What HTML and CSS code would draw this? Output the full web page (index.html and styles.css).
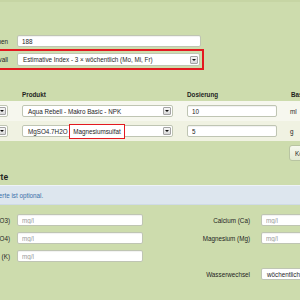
FILE: index.html
```html
<!DOCTYPE html>
<html lang="de">
<head>
    <meta charset="UTF-8">
    <meta name="viewport" content="width=device-width, initial-scale=1.0">
    <title>Düngeplan</title>
    <link rel="stylesheet" href="styles.css">
</head>
<body>

    <div class="page">
        <div class="form-row">
            <label for="volumen">Beckenvolumen</label>
            <input class="input field-wide" type="text" id="volumen" value="188">
        </div>

        <div class="form-row highlight">
            <label>Düngeintervall</label>
            <div class="select field-select">
                <span>Estimative Index - 3 × wöchentlich (Mo, Mi, Fr)</span>
                <span class="arrow"></span>
            </div>
        </div>

        <div class="components">
            <div class="comp-grid comp-head">
                <div class="col-type">Typ</div>
                <div>Produkt</div>
                <div>Dosierung</div>
                <div>Basiseinheit</div>
            </div>
            <div class="comp-grid comp-row odd">
                <div class="select type-select"><span>Fertigdünger</span><span class="arrow"></span></div>
                <div class="select prod-select"><span>Aqua Rebell - Makro Basic - NPK</span><span class="arrow"></span></div>
                <input class="input dose" type="text" value="10">
                <div class="unit">ml</div>
            </div>
            <div class="comp-grid comp-row even">
                <div class="select type-select"><span>Salz</span><span class="arrow"></span></div>
                <div class="select prod-select"><span>MgSO4.7H2O - <span class="mark">Magnesiumsulfat</span></span><span class="arrow"></span></div>
                <input class="input dose" type="text" value="5">
                <div class="unit">g</div>
            </div>
            <div class="comp-grid comp-actions">
                <button class="btn">Komponente hinzufügen</button>
            </div>
        </div>

        <h2 class="section-title">Wasserwerte</h2>
        <div class="alert">Die Angabe der Wasserwerte ist optional.</div>

        <div class="water-grid">
            <label>Nitrat (NO3)</label>
            <input class="input" type="text" placeholder="mg/l">
            <label class="right">Calcium (Ca)</label>
            <input class="input" type="text" placeholder="mg/l">

            <label>Phosphat (PO4)</label>
            <input class="input" type="text" placeholder="mg/l">
            <label class="right">Magnesium (Mg)</label>
            <input class="input" type="text" placeholder="mg/l">

            <label>Kalium (K)</label>
            <input class="input" type="text" placeholder="mg/l">
            <span></span>
            <span></span>

            <span></span>
            <span></span>
            <label class="right">Wasserwechsel</label>
            <div class="select water-select"><span>wöchentlich</span><span class="arrow"></span></div>
        </div>

        <div class="footer-line"></div>
    </div>

</body>
</html>
```

FILE: styles.css
```css
body {
    margin: 0;
    background-color: #cddcad;
    font-family: "Liberation Sans", Arial, sans-serif;
    font-size: 6.3px;
    color: #1e1e1e;
    overflow: hidden;
}

.page {
    margin-left: -90px;
    width: 560px;
    border-top: 2px solid #c6d5a4;
    padding-top: 33px;
}

.form-row {
    display: flex;
    align-items: center;
    gap: 9px;
    height: 12px;
}

.form-row label {
    width: 98px;
    text-align: right;
}

.form-row.highlight {
    width: fit-content;
    height: 13px;
    margin-top: 6px;
    outline: 2px solid #e3191f;
    outline-offset: 2px;
}

.input {
    box-sizing: border-box;
    height: 12px;
    margin: 0;
    padding: 0 4px;
    font: inherit;
    color: #1e1e1e;
    background: #fff;
    border: 1px solid #bfc5b3;
    border-radius: 2px;
    box-shadow: inset 0 1px 1px rgba(0, 0, 0, 0.06);
}

.input::placeholder {
    color: #999;
}

.field-wide {
    width: 184px;
}

.select {
    display: flex;
    align-items: center;
    justify-content: space-between;
    box-sizing: border-box;
    height: 12px;
    padding: 0 1px 0 5px;
    background: #fff;
    border: 1px solid #bfc5b3;
    border-radius: 2px;
    white-space: nowrap;
}

.select .arrow {
    display: flex;
    align-items: center;
    justify-content: center;
    flex: none;
    box-sizing: border-box;
    width: 8px;
    height: 8px;
    border: 1px solid #a3a3a3;
    border-radius: 1px;
    background: linear-gradient(#f6f6f6, #d9d9d9);
}

.select .arrow::after {
    content: "";
    border-left: 2px solid transparent;
    border-right: 2px solid transparent;
    border-top: 2px solid #111;
}

.field-select {
    width: 183px;
    height: 13px;
}

.components {
    margin-top: 22px;
}

.comp-grid {
    display: grid;
    grid-template-columns: 98px 151px 90px auto;
    column-gap: 14px;
    align-items: center;
}

.comp-head {
    height: 13px;
    font-weight: bold;
}

.col-type {
    padding-left: 20px;
}

.comp-row {
    padding: 4px 0;
}

.comp-row.odd {
    background: #f6f7ee;
}

.comp-row.even {
    background: #f0f2e2;
}

.type-select {
    width: 80px;
    justify-self: end;
}

.prod-select {
    width: 151px;
}

.dose {
    width: 90px;
}

.unit {
    margin-left: -1px;
}

.mark {
    display: inline-block;
    margin-left: -4px;
    padding: 3px 3px;
    background: #fff;
    border: 1.5px solid #e3191f;
    line-height: 7px;
}

.comp-actions {
    margin-top: 4px;
}

.btn {
    grid-column: 4;
    justify-self: start;
    height: 16px;
    margin-left: -2px;
    padding: 0 5px;
    font: inherit;
    color: #1e1e1e;
    white-space: nowrap;
    background: linear-gradient(#f6f9ef, #e3ead4);
    border: 1px solid #b8c4a2;
    border-radius: 3px;
}

.section-title {
    margin: 11px 0 0 46px;
    font-size: 8.5px;
    line-height: 10px;
}

.alert {
    margin-top: 3px;
    padding: 6px 10px 5px 18px;
    line-height: 7px;
    color: #3b6ea8;
    background: #dde6ee;
    border-top: 1px solid #eef3f7;
    border-bottom: 1px solid #cfdbe6;
}

.water-grid {
    display: grid;
    grid-template-columns: 100px 126px 104px 126px;
    grid-auto-rows: 12px;
    column-gap: 7px;
    row-gap: 6px;
    align-items: center;
    margin-top: 9px;
}

.water-grid label {
    text-align: right;
}

.water-grid label.right {
    padding-right: 4px;
}

.water-select {
    width: 126px;
}

.footer-line {
    margin-top: 20px;
    border-top: 1px solid #b7c797;
}
```
